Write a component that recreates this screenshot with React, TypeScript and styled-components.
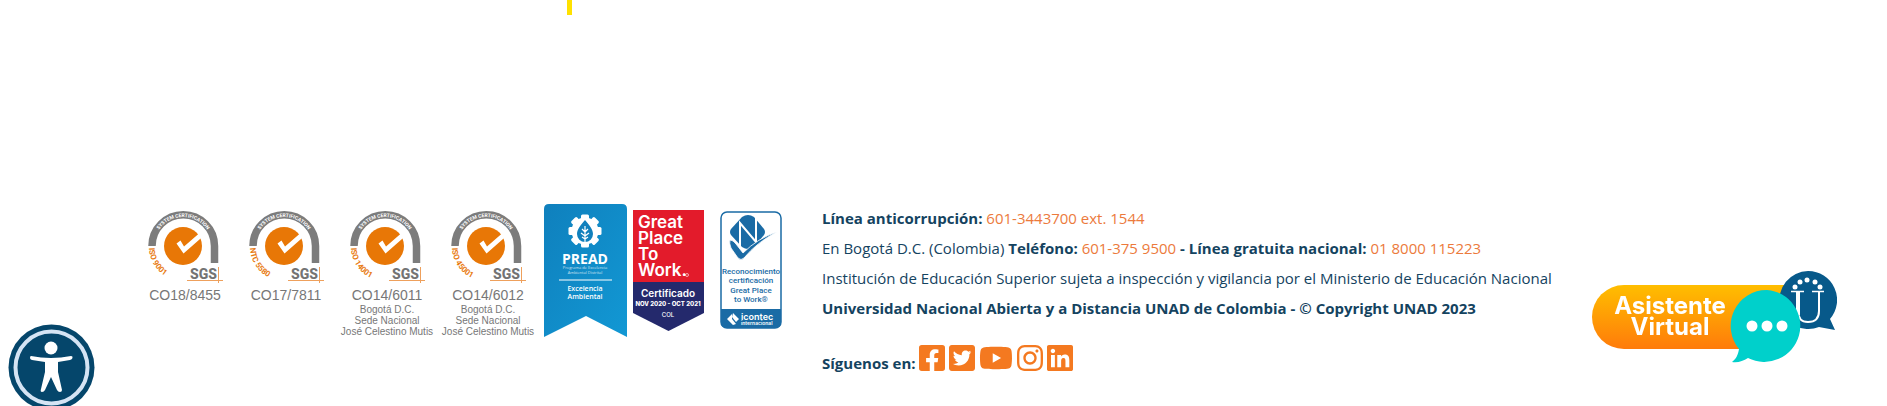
import React from 'react';
import styled, { createGlobalStyle } from 'styled-components';
import { FaFacebookSquare, FaTwitterSquare, FaYoutube, FaInstagram, FaLinkedin } from 'react-icons/fa';

const GlobalStyle = createGlobalStyle`
  body {
    margin: 0;
    background: #fff;
    color: #14435f;
    font: 15px/30px 'Open Sans', sans-serif;
  }
`;

const Page = styled.div`
  overflow: hidden;
`;

const Stage = styled.main`
  padding-left: 567px;
  padding-bottom: 188px;
`;

const Marker = styled.div`
  width: 5px;
  height: 15px;
  background: #ffe100;
`;

const Footer = styled.footer`
  display: flex;
  align-items: flex-start;
  gap: 40px;
  padding: 0 135px 28px;
`;

const Seals = styled.div`
  display: flex;
  flex: none;
  align-items: center;
  gap: 6px;
`;

const SgsRow = styled.div`
  display: flex;
  align-self: flex-start;
  gap: 1px;
  padding-top: 7px;
`;

const SgsCard = styled.figure`
  display: flex;
  flex-direction: column;
  align-items: center;
  width: 100px;
  margin: 0;
  color: #777;
  font-family: 'Liberation Sans', Arial, sans-serif;
  white-space: nowrap;
  svg { display: block; }
`;

const SgsCode = styled.figcaption`
  margin-top: 3px;
  font-size: 14px;
  line-height: 16px;
`;

const SgsPlace = styled.div`
  margin-top: 1px;
  font-size: 10px;
  line-height: 11px;
  text-align: center;
`;

const Badge = styled.svg<{ $indent?: number }>`
  display: block;
  flex: none;
  margin-left: ${(p) => p.$indent ?? 0}px;
`;

const Contact = styled.address`
  font-style: normal;
`;

const Line = styled.p`
  margin: 0;
`;

const Phone = styled.a`
  color: #ec7a3c;
  text-decoration: none;
`;

const Social = styled.p`
  margin: 20px 0 0;
`;

const SocialLink = styled.a<{ $width: number }>`
  color: #f47920;
  svg {
    height: 30px;
    width: ${(p) => p.$width}px;
    vertical-align: -4px;
  }
`;

const Floating = styled.button<{ $side: 'left' | 'right' }>`
  position: fixed;
  ${(p) => (p.$side === 'left' ? 'left: 8px; bottom: -5px;' : 'right: 50px; bottom: 43px;')}
  padding: 0;
  border: 0;
  background: none;
  cursor: pointer;
  svg { display: block; }
`;

const COMPACT = 'Roboto, sans-serif';

function SgsMark({ id, norm }: { id: string; norm: string }) {
  return (
    <svg width="76" height="74" viewBox="0 0 76 74" role="img" aria-label={`SGS ${norm}`}>
      <path d="M5 36A31 31 0 0 1 67.500 36V53" fill="none" stroke="#7c7c7c" strokeWidth="7.500" />
      <path id={`${id}-top`} d="M7 36A29 29 0 0 1 65 36" fill="none" />
      <path id={`${id}-side`} d="M2 37A34 34 0 0 0 36 71" fill="none" />
      <text fill="#fff" fontFamily={COMPACT} fontSize="5" fontWeight="700" textAnchor="middle">
        <textPath href={`#${id}-top`} startOffset="50%">SYSTEM CERTIFICATION</textPath>
      </text>
      <text fill="#e87a10" fontFamily={COMPACT} fontSize="8" fontWeight="700">
        <textPath href={`#${id}-side`} startOffset="1">{norm}</textPath>
      </text>
      <circle cx="36" cy="36" r="19" fill="#e87706" />
      <path d="M29.500 33.500L33.500 30.500L37 36.500L52 23.500L57 25.500L36.500 43.500Z" fill="#fff" />
      <text x="43" y="69" fill="#737373" fontFamily={COMPACT} fontSize="14" fontWeight="800">SGS</text>
      <path d="M40 70.500H76M71.500 57V73" stroke="#eea05c" strokeWidth="1" />
    </svg>
  );
}

const certificates = [
  { norm: 'ISO 9001', code: 'CO18/8455', local: false },
  { norm: 'NTC 5580', code: 'CO17/7811', local: false },
  { norm: 'ISO 14001', code: 'CO14/6011', local: true },
  { norm: 'ISO 45001', code: 'CO14/6012', local: true },
];

function PreadBadge() {
  return (
    <Badge width="83" height="133" viewBox="0 0 83 133" role="img" aria-label="PREAD">
      <defs>
        <linearGradient id="pread" x1="0" y1="0" x2="1" y2="1">
          <stop offset="0" stopColor="#0f80bd" />
          <stop offset="1" stopColor="#1298d4" />
        </linearGradient>
      </defs>
      <path d="M0 5Q0 0 5 0H78Q83 0 83 5V133L42 112L0 133Z" fill="url(#pread)" />
      <g fill="#fff">
        <circle cx="41" cy="27" r="13.500" />
        {[0, 45, 90, 135, 180, 225, 270, 315].map((a) => (
          <rect key={a} x="37" y="10.500" width="8" height="7" rx="1.500" transform={`rotate(${a} 41 27)`} />
        ))}
      </g>
      <path d="M41 16C45 21 49 25 49 30A8 8 0 0 1 33 30C33 25 37 21 41 16Z" fill="#1080bd" />
      <path d="M41 22V38M41 28L38 25M41 28L44 25M41 32L37 29M41 32L45 29M41 35L38 33M41 35L44 33" stroke="#fff" strokeWidth="1.200" fill="none" />
      <g fill="#fff" textAnchor="middle" fontFamily="'Open Sans', sans-serif">
        <text x="41" y="60" fontSize="14" fontWeight="700">PREAD</text>
        <g fontSize="4" opacity=".75">
          <text x="41" y="65">Programa de Excelencia</text>
          <text x="41" y="70">Ambiental Distrital</text>
        </g>
        <g fontSize="7" fontWeight="600">
          <text x="41" y="87">Excelencia</text>
          <text x="41" y="95">Ambiental</text>
        </g>
      </g>
      <path d="M15 76H68" stroke="#fff" />
    </Badge>
  );
}

function GreatPlaceBadge() {
  return (
    <Badge width="71" height="121" viewBox="0 0 71 121" role="img" aria-label="Great Place To Work">
      <path d="M0 0H71V72H0Z" fill="#e31b2b" />
      <path d="M0 72H71V103L35.500 121L0 103Z" fill="#24296c" />
      <g fill="#fff" fontFamily="Inter, sans-serif" fontWeight="600">
        <g fontSize="17">
          <text x="5" y="18">Great</text>
          <text x="5" y="34">Place</text>
          <text x="5" y="50">To</text>
          <text x="5" y="66">Work.</text>
        </g>
        <g textAnchor="middle">
          <text x="35" y="87" fontSize="10">Certificado</text>
          <text x="35" y="96" fontSize="6" fontWeight="800">NOV 2020 - OCT 2021</text>
          <text x="35" y="107" fontSize="6" fontWeight="500">COL</text>
        </g>
      </g>
      <circle cx="54" cy="65" r="1.500" fill="none" stroke="#fff" strokeWidth=".6" />
    </Badge>
  );
}

function IcontecBadge() {
  return (
    <Badge $indent={10} width="62" height="118" viewBox="0 0 62 118" role="img" aria-label="Icontec">
      <rect x="1" y="1" width="60" height="116" rx="6" fill="#fff" stroke="#1a6ba5" strokeWidth="1.500" />
      <path d="M1 98H61V111Q61 117 55 117H7Q1 117 1 111Z" fill="#1a6ba5" />
      <path d="M11 18L22 6Q25 4 28 4Q31 4 34 6L44 18Q46 21 44 24L34 36Q31 38 28 38Q25 38 22 36L11 24Q9 21 11 18Z" fill="#1a6ba5" />
      <path d="M20 38V12L36 31V4" fill="none" stroke="#fff" strokeWidth="2" />
      <g fill="#1a6ba5">
        <path d="M10 29Q13 29 16 33L23 42Q38 27 57 21Q37 31 24 47Q21 50 18 47L11 37Q9 32 10 29Z" stroke="#fff" strokeWidth=".8" />
        <g fontFamily={COMPACT} fontSize="8" fontWeight="500" textAnchor="middle">
          <text x="31" y="63">Reconocimiento</text>
          <text x="31" y="72">certificación</text>
          <text x="31" y="82">Great Place</text>
          <text x="31" y="91">to Work®</text>
        </g>
      </g>
      <g fill="#fff" fontFamily="Inter, sans-serif">
        <path d="M13 102L19 108L16 111L12 106ZM12 103V108L16 113L13 114L7 108Z" />
        <text x="21" y="109" fontSize="9" fontWeight="600">icontec</text>
        <text x="21" y="114" fontSize="5" fontWeight="600">internacional</text>
      </g>
    </Badge>
  );
}

function AssistantArt() {
  return (
    <svg width="245" height="92" viewBox="0 0 245 92">
      <defs>
        <linearGradient id="pill" x1="0" y1="0" x2="0" y2="1">
          <stop offset="0" stopColor="#ffbe00" />
          <stop offset="1" stopColor="#ff7b0a" />
        </linearGradient>
      </defs>
      <path d="M32 14H200V78H32A32 32 0 0 1 32 14Z" fill="url(#pill)" />
      <path d="M216 0A29 29 0 1 0 227 56L243 59L238 48A29 29 0 0 0 216 0Z" fill="#07598a" />
      <g fill="#fff">
        <circle cx="203" cy="16" r="2.500" />
        <circle cx="208" cy="11" r="2.500" />
        <circle cx="215" cy="9" r="2.500" />
        <circle cx="223" cy="11" r="2.500" />
        <circle cx="228" cy="16" r="2.500" />
      </g>
      <path d="M199 20.500H212M220 20.500H232" stroke="#fff" strokeWidth="1.500" />
      <path d="M206 20V40Q206 51 216 51Q227 51 227 40V20" fill="none" stroke="#fff" strokeWidth="2" />
      <path d="M206 20V44" stroke="#fff" strokeWidth="4" />
      <path d="M175 19A36 36 0 1 1 156 87C151 90 146 92 140 91C144 88 146 84 147 78A36 36 0 0 1 175 19Z" fill="#00d0cb" />
      <g fill="#fff">
        <circle cx="160" cy="55" r="5.500" />
        <circle cx="175" cy="55" r="5.500" />
        <circle cx="190" cy="55" r="5.500" />
        <g fontFamily="Inter, sans-serif" fontSize="24" fontWeight="700" textAnchor="middle">
          <text x="78" y="43">Asistente</text>
          <text x="78" y="64">Virtual</text>
        </g>
      </g>
    </svg>
  );
}

function AccessibilityArt() {
  return (
    <svg width="87" height="87" viewBox="0 0 87 87">
      <circle cx="43.500" cy="43.500" r="43" fill="#05466b" />
      <circle cx="43.500" cy="43.500" r="36" fill="none" stroke="#d5e4f4" strokeWidth="4" />
      <g fill="#fff">
        <circle cx="43" cy="24" r="6.500" />
        <path d="M23 32Q43 36 63 32Q65 32 64.500 34Q64 35.500 62 36L50 38V48L54 66Q54 68 52 68Q50 68 49 66L43 53L37 66Q36 68 34 68Q32 68 33 65L37 48V38L24 36Q22 35.500 22 34Q22 32 23 32Z" />
      </g>
    </svg>
  );
}

const networks = [
  { name: 'Facebook', Icon: FaFacebookSquare, width: 26 },
  { name: 'Twitter', Icon: FaTwitterSquare, width: 26 },
  { name: 'YouTube', Icon: FaYoutube, width: 34 },
  { name: 'Instagram', Icon: FaInstagram, width: 26 },
  { name: 'LinkedIn', Icon: FaLinkedin, width: 26 },
];

export default function App() {
  return (
    <Page>
      <GlobalStyle />
      <Stage>
        <Marker />
      </Stage>
      <Footer>
        <Seals>
          <SgsRow>
            {certificates.map((c) => (
              <SgsCard key={c.code}>
                <SgsMark id={c.code.replace('/', '-')} norm={c.norm} />
                <SgsCode>{c.code}</SgsCode>
                {c.local && (
                  <SgsPlace>
                    Bogotá D.C.
                    <br />
                    Sede Nacional
                    <br />
                    José Celestino Mutis
                  </SgsPlace>
                )}
              </SgsCard>
            ))}
          </SgsRow>
          <PreadBadge />
          <GreatPlaceBadge />
          <IcontecBadge />
        </Seals>
        <Contact>
          <Line>
            <b>Línea anticorrupción:</b> <Phone href="tel:6013443700">601-3443700 ext. 1544</Phone>
          </Line>
          <Line>
            En Bogotá D.C. (Colombia) <b>Teléfono:</b> <Phone href="tel:6013759500">601-375 9500</Phone>{' '}
            <b>- Línea gratuita nacional:</b> <Phone href="tel:018000115223">01 8000 115223</Phone>
          </Line>
          <Line>
            Institución de Educación Superior sujeta a inspección y vigilancia por el Ministerio de Educación Nacional
          </Line>
          <Line>
            <b>Universidad Nacional Abierta y a Distancia UNAD de Colombia - © Copyright UNAD 2023</b>
          </Line>
          <Social>
            <b>Síguenos en:</b>
            {networks.map(({ name, Icon, width }) => (
              <React.Fragment key={name}>
                {' '}
                <SocialLink href="#" aria-label={name} $width={width}>
                  <Icon />
                </SocialLink>
              </React.Fragment>
            ))}
          </Social>
        </Contact>
      </Footer>
      <Floating $side="left" type="button" aria-label="Accesibilidad">
        <AccessibilityArt />
      </Floating>
      <Floating $side="right" type="button" aria-label="Asistente Virtual">
        <AssistantArt />
      </Floating>
    </Page>
  );
}
